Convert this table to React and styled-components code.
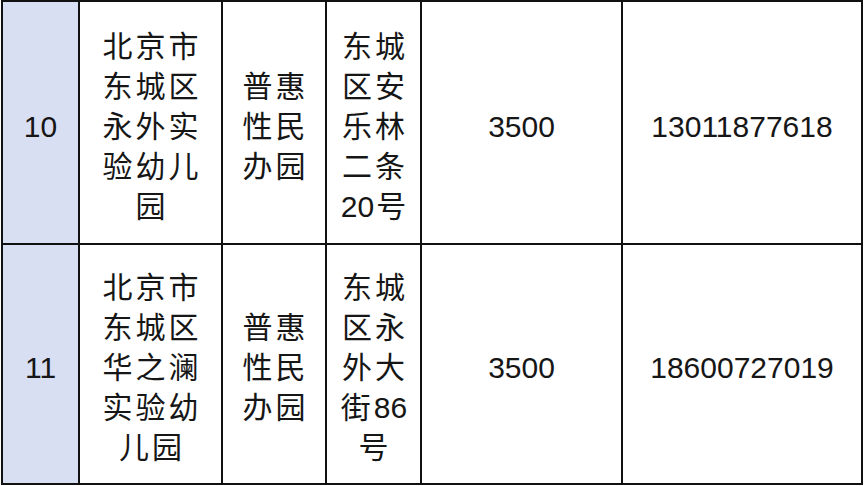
import React from "react";
import styled, { createGlobalStyle } from "styled-components";

const Global = createGlobalStyle`
  html, body { margin: 0; padding: 0; background: #ffffff; }
  body { width: 864px; height: 486px; overflow: hidden; }
`;

const Page = styled.div`
  padding: 0 0 0 1px;
`;

const Table = styled.table`
  border-collapse: collapse;
  table-layout: fixed;
  width: 860px;
  font-family: "Liberation Sans", "Noto Sans CJK SC", sans-serif;
  color: #161616;
`;

const Row = styled.tr`
  height: ${(p) => p.$h}px;
`;

const Cell = styled.td`
  border: 2px solid #111111;
  padding: 8px ${(p) => (p.$cjk ? 8 : 0)}px 0 ${(p) => (p.$cjk ? 11 : 0)}px;
  text-align: center;
  vertical-align: middle;
  font-size: 30px;
  line-height: 40px;
  letter-spacing: ${(p) => (p.$cjk ? 3 : 0)}px;
  background: ${(p) => (p.$index ? "#d8dff2" : "#ffffff")};
  word-break: normal;
  overflow-wrap: anywhere;
`;

const Num = styled.span`
  letter-spacing: 0;
  margin-right: 2px;
`;

const widths = [77, 143, 104, 95, 201, 240];

const rows = [
  {
    no: "10",
    name: "北京市东城区永外实验幼儿园",
    type: "普惠性民办园",
    addr: "东城区安乐林二条20号",
    fee: "3500",
    tel: "13011877618",
    h: 243,
  },
  {
    no: "11",
    name: "北京市东城区华之澜实验幼儿园",
    type: "普惠性民办园",
    addr: "东城区永外大街86号",
    fee: "3500",
    tel: "18600727019",
    h: 240,
  },
];

function Mixed({ text }) {
  return text
    .split(/(\d+)/)
    .filter(Boolean)
    .map((part, i) => (/^\d+$/.test(part) ? <Num key={i}>{part}</Num> : part));
}

export default function App() {
  return (
    <>
      <Global />
      <Page>
        <Table>
          <colgroup>
            {widths.map((w, i) => (
              <col key={i} style={{ width: w }} />
            ))}
          </colgroup>
          <tbody>
            {rows.map((r) => (
              <Row key={r.no} $h={r.h}>
                <Cell $index>{r.no}</Cell>
                <Cell $cjk>{r.name}</Cell>
                <Cell $cjk>{r.type}</Cell>
                <Cell $cjk>
                  <Mixed text={r.addr} />
                </Cell>
                <Cell>{r.fee}</Cell>
                <Cell>{r.tel}</Cell>
              </Row>
            ))}
          </tbody>
        </Table>
      </Page>
    </>
  );
}
